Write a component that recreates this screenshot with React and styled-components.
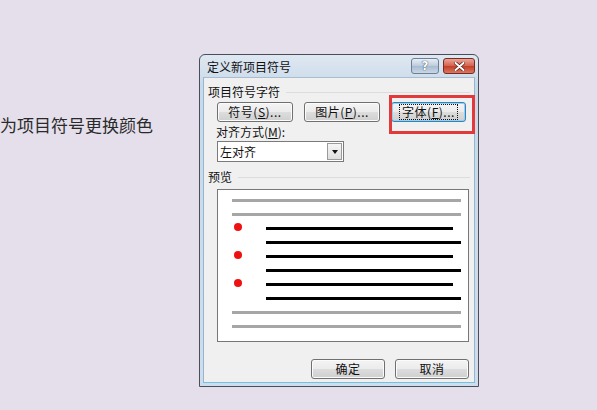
import React from 'react'
import styled, { createGlobalStyle } from 'styled-components'

const GlobalStyle = createGlobalStyle`
  html, body {
    margin: 0;
    padding: 0;
    background: #e4dfea;
  }
  body {
    font-family: "Noto Sans CJK SC", "Liberation Sans", sans-serif;
  }
`

const Page = styled.div`
  width: 597px;
  height: 410px;
  display: flex;
  align-items: flex-start;
  background: #e4dfea;
  overflow: hidden;
`

const Side = styled.div`
  width: 199px;
  flex: none;
  padding-top: 114px;
  overflow: hidden;
`

const Caption = styled.p`
  margin: 0;
  font-size: 17px;
  line-height: 22px;
  color: #2a2a2a;
  white-space: nowrap;
`

const Window = styled.div`
  margin-top: 54px;
  width: 280px;
  height: 333px;
  box-sizing: border-box;
  border: 1px solid #4a4f57;
  border-radius: 6px 6px 0 0;
  background: linear-gradient(#dfe8f2, #cad9e9 30px, #cfdceb);
  padding: 0 3px 3px 3px;
  display: flex;
  flex-direction: column;
`

const TitleBar = styled.div`
  height: 22px;
  display: flex;
  align-items: center;
  padding-left: 4px;
  gap: 4px;
`

const Title = styled.span`
  flex: 1;
  font-size: 12px;
  color: #111;
`

const CaptionButton = styled.div`
  width: ${p => p.w}px;
  height: 16px;
  box-sizing: border-box;
  border: 1px solid ${p => (p.danger ? '#7b2a22' : '#6d7f94')};
  border-radius: 3px;
  background: ${p =>
    p.danger
      ? 'linear-gradient(#e9a598, #d4614d 50%, #c23e28 51%, #d9785f)'
      : 'linear-gradient(#e7eef6, #bccbdc 50%, #a9bbd0 51%, #c9d7e6)'};
  display: flex;
  align-items: center;
  justify-content: center;
  font: bold 12px "DejaVu Sans", sans-serif;
  color: #fff;
  text-shadow: 0 0 1px #34475c, 0 0 1px #34475c;
`

const Body = styled.div`
  flex: 1;
  background: #f0f0f0;
  border: 1px solid #8fb8d4;
  border-top-color: #a9bdd1;
  border-bottom-color: #6fc3e3;
  display: flex;
  flex-direction: column;
  font-size: 12px;
  color: #111;
`

const GroupHeader = styled.div`
  margin-top: ${p => p.top}px;
  height: 14px;
  line-height: 14px;
  padding-left: 4px;
  padding-right: 4px;
  display: flex;
  align-items: center;
  gap: 6px;
  &::after {
    content: '';
    flex: 1;
    height: 1px;
    background: #dcdcdc;
  }
`

const ButtonRow = styled.div`
  margin-top: 3px;
  padding-left: 13px;
  display: flex;
  gap: 11px;
`

const Button = styled.div`
  position: relative;
  width: ${p => p.w || 76}px;
  height: 20px;
  box-sizing: border-box;
  border: 1px solid ${p => (p.focused ? '#3a7fb6' : '#707070')};
  border-radius: 3px;
  background: linear-gradient(#f4f4f4, #ebebeb 50%, #dddddd 51%, #cfcfcf);
  display: flex;
  align-items: center;
  justify-content: center;
  font-size: 12px;
  line-height: 14px;
  letter-spacing: 0.5px;
  box-shadow: ${p => (p.focused ? 'inset 0 0 0 1px #8fd3f4' : 'inset 0 0 0 1px #fbfbfb')};
  u {
    text-decoration: underline;
  }
`

const FocusRing = styled.span`
  padding: 0 2px;
  outline: 1px dotted #111;
  outline-offset: 0;
`

const Highlight = styled.div`
  position: absolute;
  left: -3px;
  top: -8px;
  width: 86px;
  height: 39px;
  box-sizing: border-box;
  border: 3px solid #e2393b;
  pointer-events: none;
`

const FieldLabel = styled.div`
  margin-top: 3px;
  padding-left: 12px;
  height: 14px;
  line-height: 14px;
`

const Select = styled.div`
  margin: 2px 0 0 13px;
  width: 127px;
  height: 21px;
  box-sizing: border-box;
  border: 1px solid #7a7a7a;
  background: #fff;
  display: flex;
  align-items: center;
`

const SelectValue = styled.span`
  flex: 1;
  padding-left: 2px;
`

const SelectArrow = styled.div`
  width: 15px;
  height: 17px;
  margin-right: 1px;
  box-sizing: border-box;
  border: 1px solid #9a9a9a;
  background: linear-gradient(#f6f6f6, #dedede);
  display: flex;
  align-items: center;
  justify-content: center;
  &::before {
    content: '';
    border-left: 3.5px solid transparent;
    border-right: 3.5px solid transparent;
    border-top: 4px solid #111;
  }
`

const Preview = styled.div`
  margin: 5px 0 0 13px;
  width: 252px;
  height: 153px;
  box-sizing: border-box;
  border: 1px solid #777;
  background: #fff;
  padding-top: 3px;
  display: flex;
  flex-direction: column;
`

const PreviewRow = styled.div`
  height: 14px;
  display: flex;
  align-items: center;
  padding-left: ${p => (p.list ? 15 : 14)}px;
  padding-right: ${p => p.right}px;
`

const BulletSlot = styled.div`
  width: 33px;
  flex: none;
  display: flex;
  align-items: center;
`

const Bullet = styled.div`
  width: 8px;
  height: 8px;
  margin-left: 1px;
  margin-bottom: 3px;
  border-radius: 50%;
  background: #ee1111;
`

const Line = styled.div`
  flex: 1;
  height: 3px;
  background: ${p => (p.dark ? '#000' : '#a6a6a6')};
`

const Footer = styled.div`
  margin-top: 17px;
  padding-right: 5px;
  display: flex;
  justify-content: flex-end;
  gap: 10px;
`

const listRows = [
  { bullet: true, right: 15 },
  { bullet: false, right: 7 },
  { bullet: true, right: 15 },
  { bullet: false, right: 7 },
  { bullet: true, right: 15 },
  { bullet: false, right: 7 },
]

function CloseIcon() {
  return (
    <svg width="11" height="9" viewBox="0 0 11 9">
      <path d="M1.5 1 L9.5 8 M9.5 1 L1.5 8" stroke="#5a1a12" strokeWidth="3.4" strokeLinecap="round" />
      <path d="M1.5 1 L9.5 8 M9.5 1 L1.5 8" stroke="#fff" strokeWidth="2" strokeLinecap="round" />
    </svg>
  )
}

export default function App() {
  return (
    <Page>
      <GlobalStyle />
      <Side>
        <Caption>为项目符号更换颜色</Caption>
      </Side>
      <Window>
        <TitleBar>
          <Title>定义新项目符号</Title>
          <CaptionButton w={28}>?</CaptionButton>
          <CaptionButton w={32} danger>
            <CloseIcon />
          </CaptionButton>
        </TitleBar>
        <Body>
          <GroupHeader top={7}>项目符号字符</GroupHeader>
          <ButtonRow>
            <Button>符号(<u>S</u>)...</Button>
            <Button>图片(<u>P</u>)...</Button>
            <Button focused w={75}>
              <FocusRing>字体(<u>F</u>)...</FocusRing>
              <Highlight />
            </Button>
          </ButtonRow>
          <FieldLabel>对齐方式(<u>M</u>):</FieldLabel>
          <Select>
            <SelectValue>左对齐</SelectValue>
            <SelectArrow />
          </Select>
          <GroupHeader top={8}>预览</GroupHeader>
          <Preview>
            <PreviewRow right={7}><Line /></PreviewRow>
            <PreviewRow right={7}><Line /></PreviewRow>
            {listRows.map((r, i) => (
              <PreviewRow key={i} list right={r.right}>
                <BulletSlot>{r.bullet && <Bullet />}</BulletSlot>
                <Line dark />
              </PreviewRow>
            ))}
            <PreviewRow right={7}><Line /></PreviewRow>
            <PreviewRow right={7}><Line /></PreviewRow>
          </Preview>
          <Footer>
            <Button w={74}>确定</Button>
            <Button w={74}>取消</Button>
          </Footer>
        </Body>
      </Window>
    </Page>
  )
}
